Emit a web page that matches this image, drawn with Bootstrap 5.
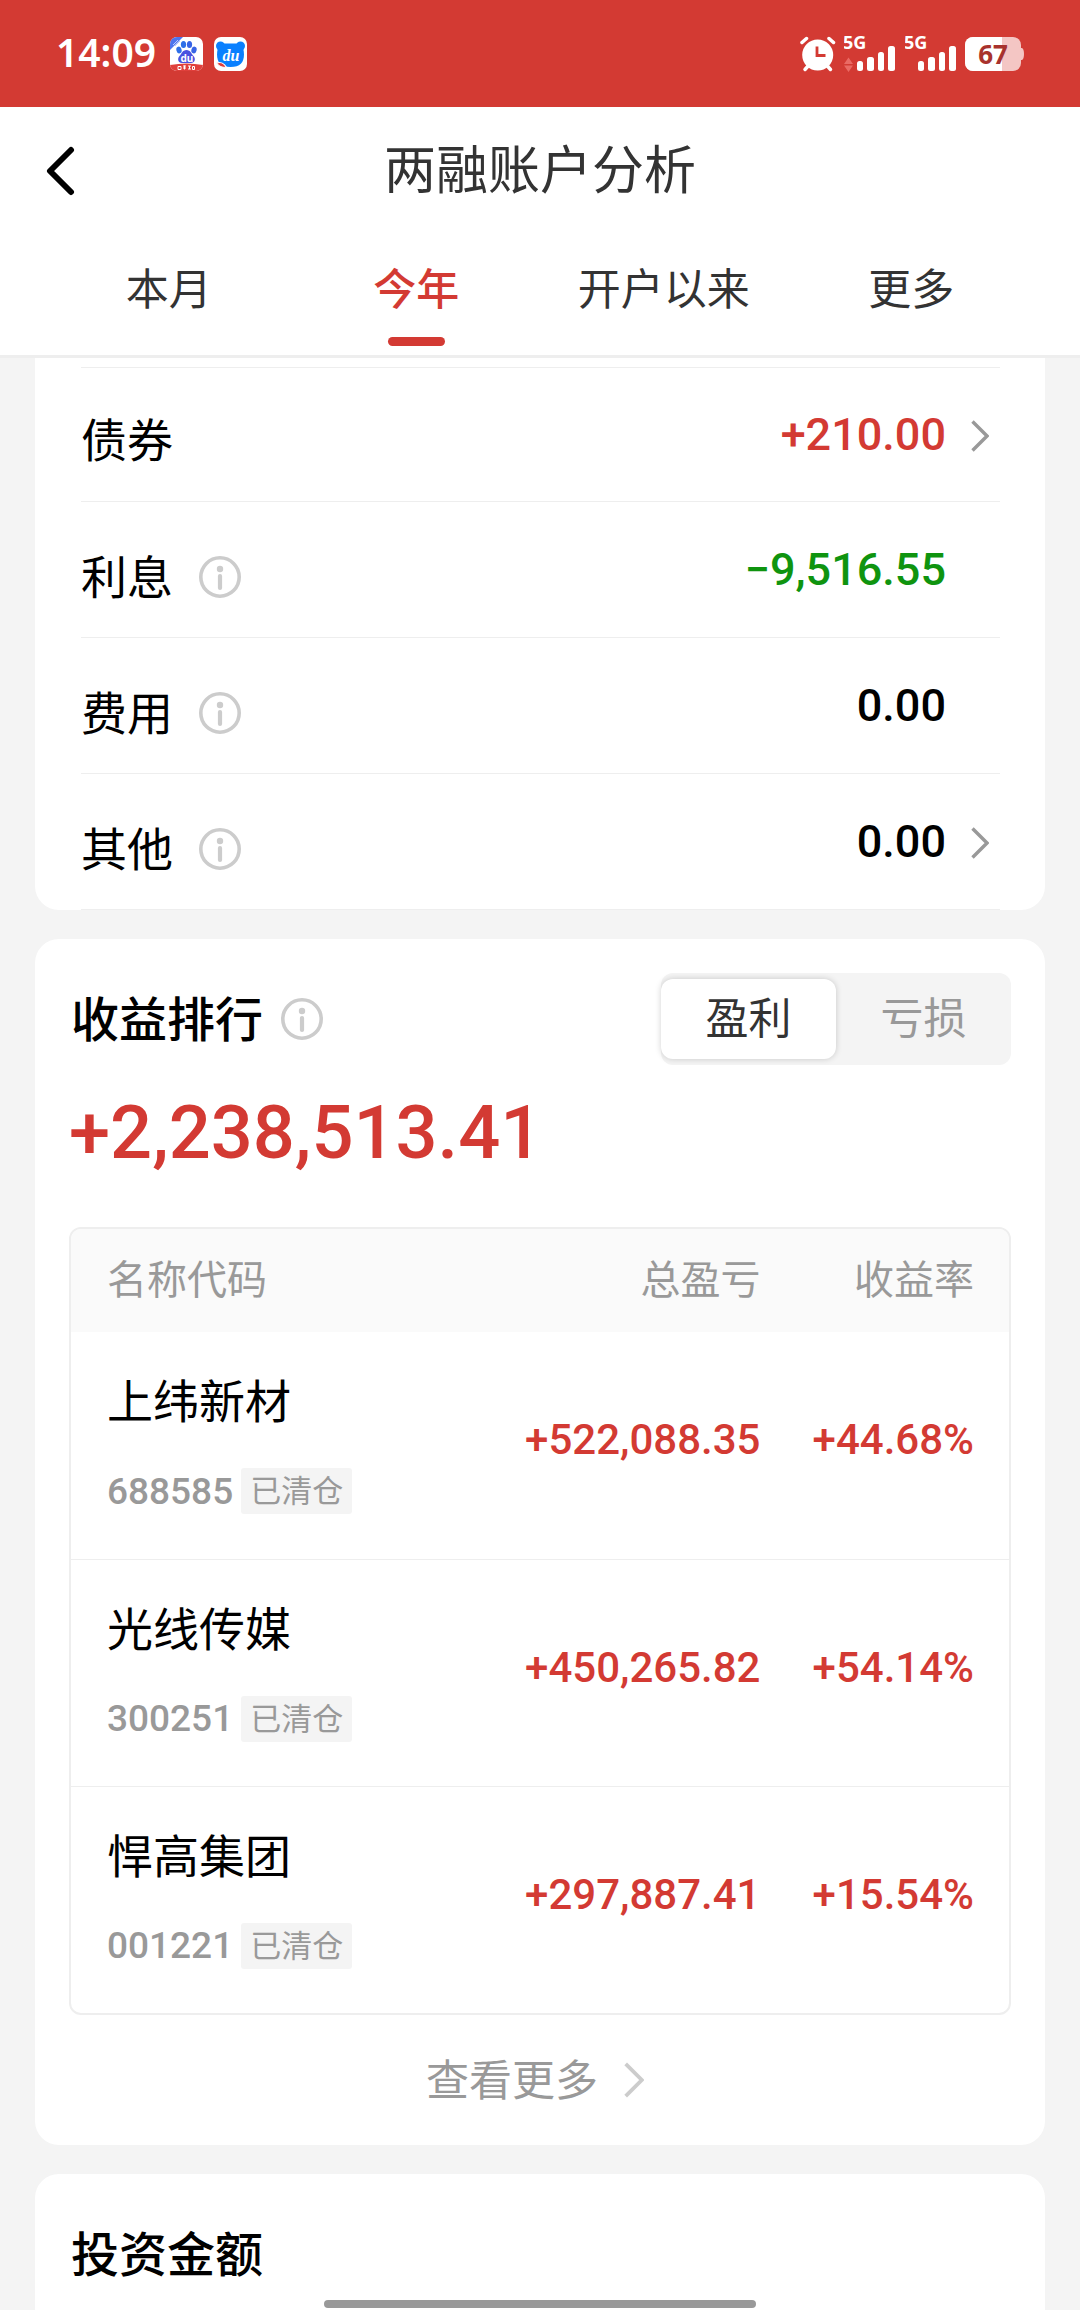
<!DOCTYPE html>
<html lang="zh-CN">
<head>
<meta charset="utf-8">
<meta name="viewport" content="width=device-width, initial-scale=1">
<title>两融账户分析</title>
<link href="https://cdn.jsdelivr.net/npm/bootstrap@5.3.0/dist/css/bootstrap.min.css" rel="stylesheet">
<style>
  :root { --app-red: #d33a33; --app-green: #0f940f; --app-grey: #999; --app-line: #eee; --app-page: #f4f4f4; }
  body { background: var(--app-page); color: #000; font-family: "Noto Sans CJK SC", sans-serif; line-height: 1; }
  svg { display: block; flex: none; }
  svg text { font-family: "Noto Sans", sans-serif; }

  .status-bar { background: var(--app-red); height: 107px; padding: 0 56px; }
  .status-time { font: 600 39px/60px "Noto Sans", sans-serif; margin-right: 14px; padding-bottom: 3px; }

  .title-bar { height: 128px; padding: 0 46px; }
  .title-bar h1 { font-size: 52px; font-weight: 400; line-height: 64px; color: #333; padding-bottom: 8px; }
  .side-slot { width: 60px; }

  .period-tabs { height: 123px; padding: 0 45px; border-bottom: 3px solid var(--app-line); }
  .period-tabs .nav-link { padding: 19px 0 0; height: 120px; font-size: 43px; line-height: 64px; color: #333; border: 0; }
  .period-tabs .nav-link.active { color: var(--app-red); font-weight: 500; }
  .period-tabs .nav-link.active::after { content: ""; display: block; width: 57px; height: 9px; margin: 19px auto 0; border-radius: 5px; background: var(--app-red); }

  .panels { gap: 29px; padding: 0 35px; }
  .panel { background: #fff; border-radius: 24px; }
  .panel-detail { border-top-left-radius: 0; border-top-right-radius: 0; padding: 9px 45px 0 46px; }
  .panel-last { border-bottom-left-radius: 0; border-bottom-right-radius: 0; }
  .panel-rank, .panel-last { padding: 34px 34px 0; }
  .panel-head { height: 92px; }
  .panel-head h2 { font-size: 48px; font-weight: 500; line-height: 64px; padding: 0 0 6px 2px; }
  .head-label { gap: 18px; }

  .detail-list { border-top: 1px solid var(--app-line); }
  .detail-row { height: 136px; border-bottom: 1px solid var(--app-line); }
  .detail-row:first-child { height: 134px; }
  .detail-label { font-size: 46px; line-height: 64px; padding-top: 8px; gap: 26px; }
  .detail-row:first-child .detail-label { padding-top: 4px; }
  .detail-label .info-btn { padding-top: 6px; }
  .num { font-family: Roboto, sans-serif; font-weight: 500; }
  .detail-value { font-size: 45px; line-height: 64px; }
  .arrow-slot { width: 54px; padding: 3px 11px 0 0; color: var(--app-grey); }
  .info-btn { background: none; border: 0; padding: 0; color: #ccc; }
  .up { color: var(--app-red); }
  .down { color: var(--app-green); }

  .switcher { width: 350px; height: 92px; padding: 6px 0; border-radius: 12px; background: var(--app-page); }
  .switcher button { flex: 1; border: 0; border-radius: 12px; background: none; color: var(--app-grey); font-size: 43px; line-height: 64px; padding: 4px 0 12px; }
  .switcher button.active { background: #fff; color: #333; box-shadow: 0 0 6px rgba(0, 0, 0, .18); }

  .total-gain { font-size: 74px; line-height: 96px; margin: 20px 0 46px; }

  .rank-box { border: 2px solid var(--app-line); border-radius: 12px; overflow: hidden; }
  .rank-table { width: 100%; border-collapse: collapse; }
  .rank-table th { height: 103px; padding: 0 0 8px; background: #fafafa; color: var(--app-grey); font-size: 40px; font-weight: 400; }
  .rank-table td { height: 227px; padding: 0 0 10px; }
  .rank-table tbody tr + tr td { border-top: 1px solid var(--app-line); }
  .rank-table th:first-child, .rank-table td:first-child { padding-left: 36px; }
  .rank-table th:last-child, .rank-table td:last-child { padding-right: 35px; width: 26.5%; }
  .rank-table td.num { font-size: 42px; }
  .stock-name { font-size: 46px; line-height: 64px; margin-bottom: 38px; }
  .stock-code { font-size: 37px; color: var(--app-grey); gap: 8px; }
  .sold-tag { height: 46px; padding: 0 9px; border-radius: 3px; background: var(--app-page); font: 400 31px/42px "Noto Sans CJK SC", sans-serif; }

  .more-link { height: 130px; gap: 26px; color: var(--app-grey); font-size: 43px; text-decoration: none; padding: 0 10px 6px 0; }
  .more-link svg { margin-top: 6px; color: #ccc; }
  .home-bar { width: 40%; height: 8px; bottom: 2px; border-radius: 4px; background: var(--app-grey); }
</style>
<script src="https://cdn.jsdelivr.net/npm/bootstrap@5.3.0/dist/js/bootstrap.bundle.min.js"></script>
</head>
<body>
<svg width="0" height="0" class="position-absolute" aria-hidden="true">
  <defs>
    <symbol id="info" viewBox="0 0 42 42">
      <circle cx="21" cy="21" r="19.2" fill="none" stroke="currentColor" stroke-width="3.600"/>
      <circle cx="21" cy="13" r="3.200" fill="currentColor"/>
      <path d="M21 20v12" stroke="currentColor" stroke-width="4.200" stroke-linecap="round"/>
    </symbol>
    <symbol id="next" viewBox="0 0 18 32">
      <path d="M1.5 1.5 16 16 1.5 30.5" fill="none" stroke="currentColor" stroke-width="3.4"/>
    </symbol>
    <symbol id="signal" viewBox="0 0 52 36">
      <text x="-1" y="13" font-size="18" font-weight="700" fill="#fff">5G</text>
      <g fill="#fff">
        <rect x="13" y="25" width="6" height="10" rx="2.5"/>
        <rect x="23" y="21" width="7" height="14" rx="2.5"/>
        <rect x="34" y="16" width="6" height="19" rx="2.5"/>
        <rect x="44" y="10" width="7" height="25" rx="2.5"/>
      </g>
    </symbol>
  </defs>
</svg>

<div class="d-flex flex-column min-vh-100">
  <div class="status-bar d-flex align-items-center justify-content-between text-white">
    <div class="d-flex align-items-center">
      <span class="status-time">14:09</span>
      <svg class="me-2" width="36" height="34" viewBox="0 0 36 34" aria-label="百度">
        <clipPath id="app-a"><rect width="33" height="34" rx="7"/></clipPath>
        <g clip-path="url(#app-a)">
          <rect width="33" height="34" fill="#fff"/>
          <path d="M0 0h13L0 13z" fill="#4d74ee"/>
          <path d="M3 8l5-5M5 9l5-5" stroke="#b9c9ff" stroke-width="1"/>
          <ellipse cx="9" cy="13" rx="2.6" ry="3.4" fill="#2e6fe8" transform="rotate(-15 9 13)"/>
          <ellipse cx="13.5" cy="7.5" rx="2.6" ry="3.6" fill="#2e6fe8"/>
          <ellipse cx="19.5" cy="7.5" rx="2.6" ry="3.6" fill="#3764e6"/>
          <ellipse cx="24" cy="13" rx="2.6" ry="3.4" fill="#3764e6" transform="rotate(15 24 13)"/>
          <path d="M16.500 13c4 0 5 4 7 6 2.500 2.500 1.500 7-2.500 7h-9c-4 0-5-4.500-2.500-7 2-2 3-6 7-6z" fill="#4a52e0"/>
          <text x="10.500" y="24.500" font-size="10" font-weight="700" fill="#fff">du</text>
          <path d="M0 28q16.500-3 33 0V34H0z" fill="#e0403c"/>
          <path d="M8 29.500h3v3H8zM13 29h3M13 31h3M14.500 28.500v4M18 29h3M18 32h3M19.500 29v3M22.500 29.500h2v3h-2z" stroke="#fff" stroke-width="1" fill="none"/>
        </g>
      </svg>
      <svg width="33" height="34" viewBox="0 0 33 34" aria-label="度小满">
        <rect width="33" height="34" rx="7" fill="#fff"/>
        <circle cx="6.500" cy="9" r="4.500" fill="#0a80ff"/><circle cx="26.500" cy="9" r="4.500" fill="#0a80ff"/>
        <path d="M6 6.500h21c2 4 3 7 3 11 0 8-4 12.500-13.500 12.500S3 25.500 3 17.500c0-4 1-7 3-11z" fill="#0a80ff"/>
        <path d="M2.500 26c4-1.500 8 .5 10 4.500-4 0-8-1-10-4.500z" fill="#e23b3b" stroke="#fff" stroke-width="1.200"/>
        <text x="8.500" y="23.500" font-size="16" font-weight="700" font-style="italic" fill="#fff" style="font-family:'Liberation Serif',serif">du</text>
      </svg>
    </div>
    <div class="d-flex align-items-center">
      <svg width="44" height="36" viewBox="0 0 44 36" aria-label="闹钟">
        <g fill="none" stroke="#fff" stroke-width="3.500" stroke-linecap="round">
          <path d="M2 6.500 6.500 2.500M33.500 6.500 29 2.500"/>
          <path d="M5 33.500 9 29M30.500 33.500 26.500 29"/>
        </g>
        <circle cx="17.700" cy="19" r="15.500" fill="#fff"/>
        <path d="M17 10.500V19.500H25.500" fill="none" stroke="#d33a33" stroke-width="2.800"/>
      </svg>
      <svg width="61" height="36" viewBox="0 0 61 36" aria-label="信号一">
        <use href="#signal" width="52" height="36"/>
        <path d="M0 28 4.500 21.500 9 28zM0 29.500H9L4.500 36z" fill="#ea6a64"/>
      </svg>
      <svg width="60" height="36" viewBox="0 0 60 36" aria-label="信号二"><use href="#signal" width="52" height="36"/></svg>
      <svg width="59" height="34" viewBox="0 0 59 34" aria-label="电量">
        <clipPath id="batt"><rect width="56" height="34" rx="8"/></clipPath>
        <path d="M54 11h3q2 1 2 6t-2 6h-3z" fill="#f4c6c4"/>
        <g clip-path="url(#batt)"><rect width="56" height="34" fill="#f4c6c4"/><rect width="37" height="34" fill="#fff"/></g>
        <text x="28" y="27" text-anchor="middle" font-size="26" font-weight="700" fill="#a8322d">67</text>
      </svg>
    </div>
  </div>

  <header class="bg-white">
    <div class="title-bar d-flex align-items-center justify-content-between">
      <a href="#" class="side-slot" aria-label="返回">
        <svg width="29" height="50" viewBox="0 0 29 50"><path d="M25 4 4 25 25 46" fill="none" stroke="#000" stroke-width="6" stroke-linecap="round" stroke-linejoin="round"/></svg>
      </a>
      <h1 class="m-0">两融账户分析</h1>
      <span class="side-slot"></span>
    </div>
    <nav class="period-tabs nav nav-justified">
      <a class="nav-link" href="#">本月</a>
      <a class="nav-link active" aria-current="page" href="#">今年</a>
      <a class="nav-link" href="#">开户以来</a>
      <a class="nav-link" href="#">更多</a>
    </nav>
  </header>

  <main class="panels d-flex flex-column flex-grow-1">
    <section class="panel panel-detail">
      <ul class="detail-list list-unstyled m-0">
        <li class="detail-row d-flex align-items-center">
          <span class="detail-label">债券</span>
          <span class="detail-value num up ms-auto">+210.00</span>
          <a href="#" class="arrow-slot d-flex justify-content-end" aria-label="债券明细"><svg width="18" height="32"><use href="#next"/></svg></a>
        </li>
        <li class="detail-row d-flex align-items-center">
          <span class="detail-label d-flex align-items-center">利息
            <button class="info-btn" type="button" aria-label="利息说明"><svg width="42" height="42"><use href="#info"/></svg></button></span>
          <span class="detail-value num down ms-auto">−9,516.55</span>
          <span class="arrow-slot"></span>
        </li>
        <li class="detail-row d-flex align-items-center">
          <span class="detail-label d-flex align-items-center">费用
            <button class="info-btn" type="button" aria-label="费用说明"><svg width="42" height="42"><use href="#info"/></svg></button></span>
          <span class="detail-value num ms-auto">0.00</span>
          <span class="arrow-slot"></span>
        </li>
        <li class="detail-row d-flex align-items-center">
          <span class="detail-label d-flex align-items-center">其他
            <button class="info-btn" type="button" aria-label="其他说明"><svg width="42" height="42"><use href="#info"/></svg></button></span>
          <span class="detail-value num ms-auto">0.00</span>
          <a href="#" class="arrow-slot d-flex justify-content-end" aria-label="其他明细"><svg width="18" height="32"><use href="#next"/></svg></a>
        </li>
      </ul>
    </section>

    <section class="panel panel-rank">
      <div class="panel-head d-flex align-items-center justify-content-between">
        <div class="head-label d-flex align-items-center">
          <h2 class="m-0">收益排行</h2>
          <button class="info-btn" type="button" aria-label="收益排行说明"><svg width="42" height="42"><use href="#info"/></svg></button>
        </div>
        <div class="switcher d-flex" role="group" aria-label="盈亏切换">
          <button type="button" class="active" aria-pressed="true">盈利</button>
          <button type="button" aria-pressed="false">亏损</button>
        </div>
      </div>
      <p class="total-gain num up">+2,238,513.41</p>
      <div class="rank-box">
        <table class="rank-table">
          <thead>
            <tr><th scope="col">名称代码</th><th scope="col" class="text-end">总盈亏</th><th scope="col" class="text-end">收益率</th></tr>
          </thead>
          <tbody>
            <tr>
              <td><div class="stock-name">上纬新材</div><div class="stock-code num d-flex align-items-center">688585<span class="sold-tag">已清仓</span></div></td>
              <td class="num up text-end">+522,088.35</td><td class="num up text-end">+44.68%</td>
            </tr>
            <tr>
              <td><div class="stock-name">光线传媒</div><div class="stock-code num d-flex align-items-center">300251<span class="sold-tag">已清仓</span></div></td>
              <td class="num up text-end">+450,265.82</td><td class="num up text-end">+54.14%</td>
            </tr>
            <tr>
              <td><div class="stock-name">悍高集团</div><div class="stock-code num d-flex align-items-center">001221<span class="sold-tag">已清仓</span></div></td>
              <td class="num up text-end">+297,887.41</td><td class="num up text-end">+15.54%</td>
            </tr>
          </tbody>
        </table>
      </div>
      <a href="#" class="more-link d-flex align-items-center justify-content-center">查看更多
        <svg width="20" height="36"><use href="#next"/></svg></a>
    </section>

    <section class="panel panel-last flex-grow-1">
      <div class="panel-head d-flex align-items-center"><h2 class="m-0">投资金额</h2></div>
    </section>
  </main>
</div>
<div class="home-bar position-fixed start-50 translate-middle-x"></div>
</body>
</html>
